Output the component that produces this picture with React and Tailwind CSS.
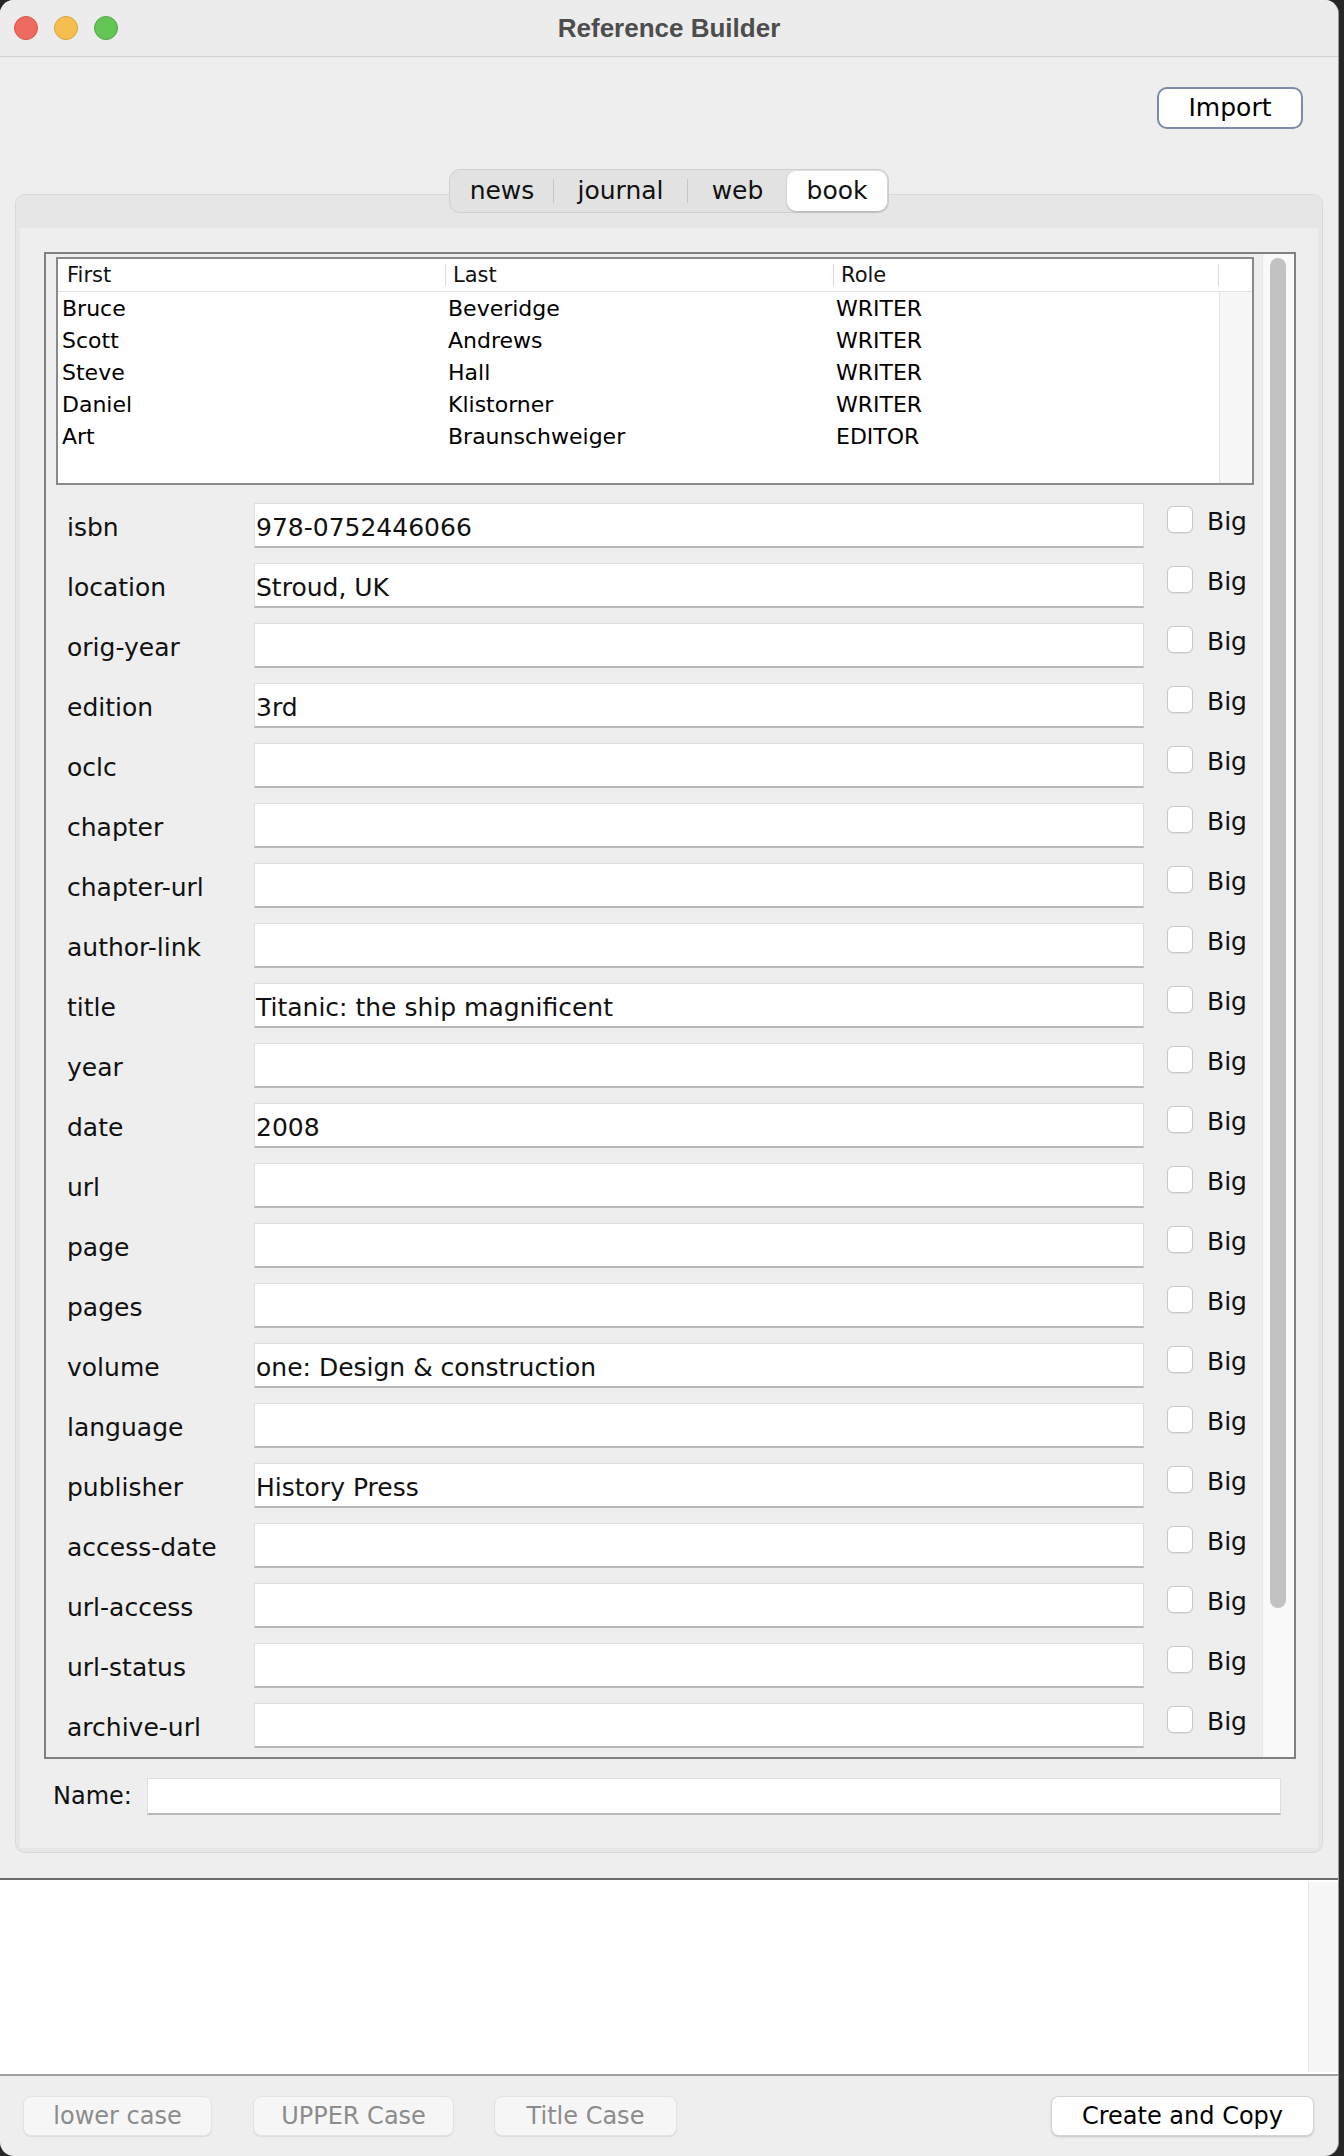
import React from 'react';

const people = [
  { first: 'Bruce', last: 'Beveridge', role: 'WRITER' },
  { first: 'Scott', last: 'Andrews', role: 'WRITER' },
  { first: 'Steve', last: 'Hall', role: 'WRITER' },
  { first: 'Daniel', last: 'Klistorner', role: 'WRITER' },
  { first: 'Art', last: 'Braunschweiger', role: 'EDITOR' },
];

const fields = [
  ['isbn', '978-0752446066'],
  ['location', 'Stroud, UK'],
  ['orig-year', ''],
  ['edition', '3rd'],
  ['oclc', ''],
  ['chapter', ''],
  ['chapter-url', ''],
  ['author-link', ''],
  ['title', 'Titanic: the ship magnificent'],
  ['year', ''],
  ['date', '2008'],
  ['url', ''],
  ['page', ''],
  ['pages', ''],
  ['volume', 'one: Design & construction'],
  ['language', ''],
  ['publisher', 'History Press'],
  ['access-date', ''],
  ['url-access', ''],
  ['url-status', ''],
  ['archive-url', ''],
];

const tabs = ['news', 'journal', 'web', 'book'];
const tabWidths = { news: 'w-[102px]', journal: 'w-[133px]', web: 'w-[99px]', book: 'w-[100px]' };

const FieldRow = ({ label, value }) => (
  <div className="flex h-[45px] mb-[15px] items-start pl-[21px]">
    <div className="w-[187px] h-[45px] leading-[50px] text-[25px] text-[#111]">{label}</div>
    <div className="w-[890px] h-[45px] bg-white border border-[#dedede] border-b-2 border-b-[#b8b8b8] pl-[1px] leading-[48px] text-[25px] text-[#111] whitespace-nowrap overflow-hidden">
      {value}
    </div>
    <div className="flex items-start mt-[3px] ml-[23px]">
      <div className="w-[26px] h-[27px] rounded-[6px] border border-[#c8c8c8] bg-white shadow-[0_1px_1px_rgba(0,0,0,0.06)]" />
      <div className="ml-[14px] leading-[31px] text-[25px] text-[#111]">Big</div>
    </div>
  </div>
);

const Button = ({ label, width, enabled }) => (
  <div
    className={
      enabled
        ? `${width} h-[40px] rounded-[8px] border border-[#d4d4d4] bg-white shadow-[0_1px_2px_rgba(0,0,0,0.18)] flex items-center justify-center text-[24px] text-black`
        : `${width} h-[40px] rounded-[8px] border border-[#e2e2e2] bg-[#f6f6f6] shadow-[0_1px_1px_rgba(0,0,0,0.08)] flex items-center justify-center text-[24px] text-[#8c8c8c]`
    }
  >
    {label}
  </div>
);

const App = () => {
  return (
    <div className="w-[1344px] h-[2156px] bg-[#262626] overflow-hidden font-['DejaVu_Sans',sans-serif]">
      <div className="w-[1339px] h-[2156px] bg-[#eeeeee] rounded-[14px] overflow-hidden flex flex-col border-r border-[#9a9a9a]">
        {/* title bar */}
        <div className="h-[57px] shrink-0 flex items-center bg-[#ececec] border-b border-[#d3d3d3]">
          <div className="w-[118px] flex items-center gap-[16px] pl-[14px]">
            <div className="w-[24px] h-[24px] rounded-full bg-[#ee6a5f] border border-[#d5564b]" />
            <div className="w-[24px] h-[24px] rounded-full bg-[#f5bf4f] border border-[#d8a23b]" />
            <div className="w-[24px] h-[24px] rounded-full bg-[#62c554] border border-[#4ea843]" />
          </div>
          <div className="flex-1 text-center font-['Liberation_Sans',sans-serif] font-bold text-[26px] text-[#4d4d4d]">
            Reference Builder
          </div>
          <div className="w-[118px]" />
        </div>

        {/* import */}
        <div className="flex justify-end pr-[35px] mt-[30px]">
          <div className="w-[146px] h-[42px] rounded-[10px] border-2 border-[#7c8ca4] bg-white flex items-center justify-center text-[25px] text-black">
            Import
          </div>
        </div>

        {/* segmented tabs */}
        <div className="flex justify-center mt-[40px] relative z-10">
          <div className="h-[44px] w-[440px] rounded-[11px] border border-[#cfcfcf] bg-[#e2e2e2] p-[1px] flex items-center">
            {tabs.map((tab, i) => (
              <React.Fragment key={tab}>
                {i > 0 && i < 3 ? <div className="w-[1px] h-[24px] bg-[#c6c6c6]" /> : null}
                <div
                  className={`${tabWidths[tab]} h-[40px] flex items-center justify-center text-[25px] text-[#111] ${
                    tab === 'book' ? 'bg-white rounded-[9px] shadow-[0_1px_2px_rgba(0,0,0,0.22)]' : ''
                  }`}
                >
                  {tab}
                </div>
              </React.Fragment>
            ))}
          </div>
        </div>

        {/* tab panel */}
        <div className="-mt-[19px] mx-[15px] h-[1659px] shrink-0 rounded-[10px] border border-[#d8d8d8] bg-[#e6e6e6] pt-[33px] px-[4px] pb-[4px] flex flex-col">
          <div className="flex-1 bg-[#eeeeee] flex flex-col">
            {/* outer scroll pane */}
            <div className="ml-[24px] mt-[24px] w-[1252px] h-[1507px] border-2 border-[#808080] flex overflow-hidden">
              <div className="w-[1216px] h-full overflow-hidden flex flex-col">
                {/* table */}
                <div className="ml-[10px] mt-[3px] w-[1198px] h-[228px] shrink-0 border-2 border-[#8a8a8a] bg-white flex flex-col">
                  <div className="h-[33px] shrink-0 flex items-center border-b border-[#e2e2e2] text-[21px] text-[#111]">
                    <div className="w-[387px] h-[22px] leading-[22px] pl-[9px]">First</div>
                    <div className="w-[388px] h-[22px] leading-[22px] border-l border-[#dadada] pl-[7px]">Last</div>
                    <div className="w-[386px] h-[22px] leading-[22px] border-x border-[#dadada] pl-[7px]">Role</div>
                  </div>
                  <div className="flex-1 flex">
                    <div className="w-[1161px] flex flex-col text-[22px] text-black">
                      {people.map((p) => (
                        <div key={p.first} className="h-[32px] flex items-center">
                          <div className="w-[387px] pl-[4px]">{p.first}</div>
                          <div className="w-[388px] pl-[3px]">{p.last}</div>
                          <div className="w-[386px] pl-[3px]">{p.role}</div>
                        </div>
                      ))}
                    </div>
                    <div className="flex-1 bg-[#f7f7f7] border-l border-[#e3e3e3]" />
                  </div>
                </div>

                {/* fields */}
                <div className="mt-[18px] flex flex-col">
                  {fields.map(([label, value]) => (
                    <FieldRow key={label} label={label} value={value} />
                  ))}
                </div>
              </div>
              <div className="flex-1 bg-[#f9f9f9] border-l border-[#e6e6e6] pt-[4px] pl-[7px]">
                <div className="w-[16px] h-[1350px] rounded-full bg-[#c2c2c2]" />
              </div>
            </div>

            {/* name row */}
            <div className="mt-[17px] flex items-center pl-[33px]">
              <div className="w-[94px] text-[24px] text-[#111] leading-[40px]">Name:</div>
              <div className="w-[1134px] h-[37px] bg-white border border-[#dedede] border-b-2 border-b-[#b8b8b8]" />
            </div>
          </div>
        </div>

        {/* text area */}
        <div className="mt-[25px] h-[198px] shrink-0 border-t-2 border-t-[#6c6c6c] border-b-2 border-b-[#a0a0a0] bg-white flex">
          <div className="flex-1" />
          <div className="w-[30px] bg-[#f7f7f7] border-l border-[#e6e6e6] my-[2px]" />
        </div>

        {/* buttons */}
        <div className="mt-[20px] flex items-center pl-[23px] pr-[24px]">
          <Button label="lower case" width="w-[189px]" />
          <div className="w-[41px]" />
          <Button label="UPPER Case" width="w-[201px]" />
          <div className="w-[40px]" />
          <Button label="Title Case" width="w-[183px]" />
          <div className="flex-1" />
          <Button label="Create and Copy" width="w-[263px]" enabled />
        </div>
      </div>
    </div>
  );
};

export default App;
